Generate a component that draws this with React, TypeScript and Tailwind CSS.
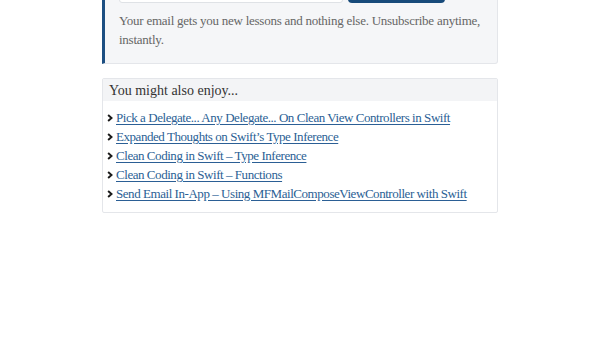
const links = [
  "Pick a Delegate... Any Delegate... On Clean View Controllers in Swift",
  "Expanded Thoughts on Swift’s Type Inference",
  "Clean Coding in Swift – Type Inference",
  "Clean Coding in Swift – Functions",
  "Send Email In-App – Using MFMailComposeViewController with Swift",
];

const Chevron = () => (
  <svg viewBox="0 0 8 10" className="w-[6px] h-[8px] shrink-0" fill="none">
    <path d="M1.5 1 L6 5 L1.5 9" stroke="#1a1a1a" strokeWidth="2.6" />
  </svg>
);

export default function App() {
  return (
    <div
      className="w-[600px] h-[338px] bg-white overflow-hidden"
      style={{ fontFamily: '"Liberation Serif", serif' }}
    >
      <div className="w-[396px] ml-[102px] -mt-[30px]">
        {/* signup box */}
        <div className="bg-[#f5f6f8] border border-[#e4e6ea] border-l-[3px] border-l-[#1d4f82] rounded-r-[3px] pl-[14px] pr-4 pb-[14px]">
          <div className="flex gap-[5px] h-[32px]">
            <div className="w-[224px] bg-white border border-[#dfe2e6] rounded-[3px]" />
            <div className="w-[97px] bg-[#174a7a] rounded-[4px]" />
          </div>
          <p className="mt-[8px] text-[13px] tracking-[-0.25px] leading-[19px] text-[#666]">
            Your email gets you new lessons and nothing else. Unsubscribe anytime, instantly.
          </p>
        </div>

        {/* related */}
        <div className="mt-[14px] border border-[#e4e6ea] rounded-[2px] pb-[9px]">
          <div className="bg-[#f3f4f6] h-[22px] px-[6px] flex items-center text-[14px] text-[#333]">
            You might also enjoy...
          </div>
          <ul className="mt-[7px] px-[4px] flex flex-col">
            {links.map((t) => (
              <li key={t} className="flex items-center gap-[3px] h-[19px] whitespace-nowrap">
                <Chevron />
                <a
                  href="#"
                  className="text-[13px] tracking-[-0.45px] text-[#2b5f95] underline underline-offset-2"
                >
                  {t}
                </a>
              </li>
            ))}
          </ul>
        </div>
      </div>
    </div>
  );
}
